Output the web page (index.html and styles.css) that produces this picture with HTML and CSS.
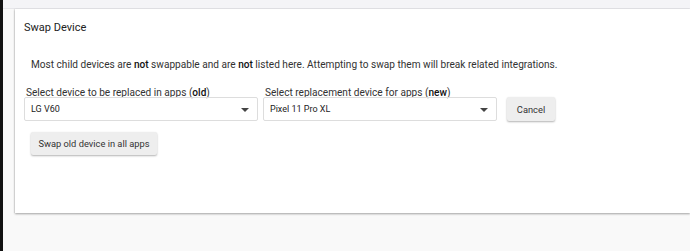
FILE: index.html
```html
<!DOCTYPE html>
<html>
<head>
<meta charset="utf-8">
<link rel="stylesheet" href="styles.css">
</head>
<body>
<div class="app">
  <div class="edge"></div>
  <div class="main">
    <div class="topbar"></div>
    <div class="card">
      <div class="title">Swap Device</div>
      <p class="note">Most child devices are <b>not</b> swappable and are <b>not</b> listed here. Attempting to swap them will break related integrations.</p>
      <div class="row">
        <div class="field">
          <label class="label">Select device to be replaced in apps (<b>old</b>)</label>
          <div class="select"><span>LG V60</span><svg class="caret" width="8" height="4" viewBox="0 0 8 4"><path d="M0 0h8L4 4z" fill="#444"/></svg></div>
        </div>
        <div class="field">
          <label class="label">Select replacement device for apps (<b>new</b>)</label>
          <div class="select"><span>Pixel 11 Pro XL</span><svg class="caret" width="8" height="4" viewBox="0 0 8 4"><path d="M0 0h8L4 4z" fill="#444"/></svg></div>
        </div>
        <button class="btn cancel">Cancel</button>
      </div>
      <button class="btn swap">Swap old device in all apps</button>
    </div>
  </div>
</div>
</body>
</html>
```
FILE: styles.css
```css
* { box-sizing: border-box; }
html, body { margin: 0; padding: 0; }
body {
  width: 690px; height: 251px; overflow: hidden;
  background: #f9f9f9;
  font-family: Roboto, "Liberation Sans", sans-serif;
  color: #222;
}
.app { display: flex; height: 251px; }
.edge { width: 3px; background: #111; flex: none; }
.main { flex: 1; display: flex; flex-direction: column; }
.topbar { height: 9px; background: #f4f4f7; border-bottom: 1px solid #e6e6ea; flex: none; }
.card {
  margin: 0 0 0 12px;
  background: #fff;
  height: 204px;
  box-shadow: 0 1px 2px rgba(0,0,0,0.35), -1px 0 1px rgba(0,0,0,0.06);
  padding: 10px 0 0 9px;
}
.title { font-size: 11px; line-height: 18px; color: #222; }
.note { margin: 21px 0 0 7px; font-size: 10.1px; line-height: 14px; color: #333; }
.note b, .label b { font-weight: 500; color: #111; }
.row { display: flex; align-items: flex-start; margin-top: 14px; }
.field { display: flex; flex-direction: column; margin-right: 5px; }
.label { font-size: 10.1px; line-height: 13px; color: #333; margin-left: 2px; margin-bottom: -2px; }
.select {
  width: 234px; height: 24px;
  border: 1px solid #ddd; border-radius: 2px;
  display: flex; align-items: center; justify-content: space-between;
  padding: 0 8px 0 6px;
  font-size: 9px; color: #222;
}
.caret { margin-top: 1px; }
.btn {
  font-family: Roboto, "Liberation Sans", sans-serif;
  font-size: 9.3px; color: #333;
  background: #eee; border: none; border-radius: 2px;
  box-shadow: 0 1px 2px rgba(0,0,0,0.3);
  height: 24px; padding: 0;
}
.cancel { margin-left: 5px; margin-top: 11px; width: 48px; }
.swap { margin: 11px 0 0 7px; width: 126px; height: 23px; }
```
